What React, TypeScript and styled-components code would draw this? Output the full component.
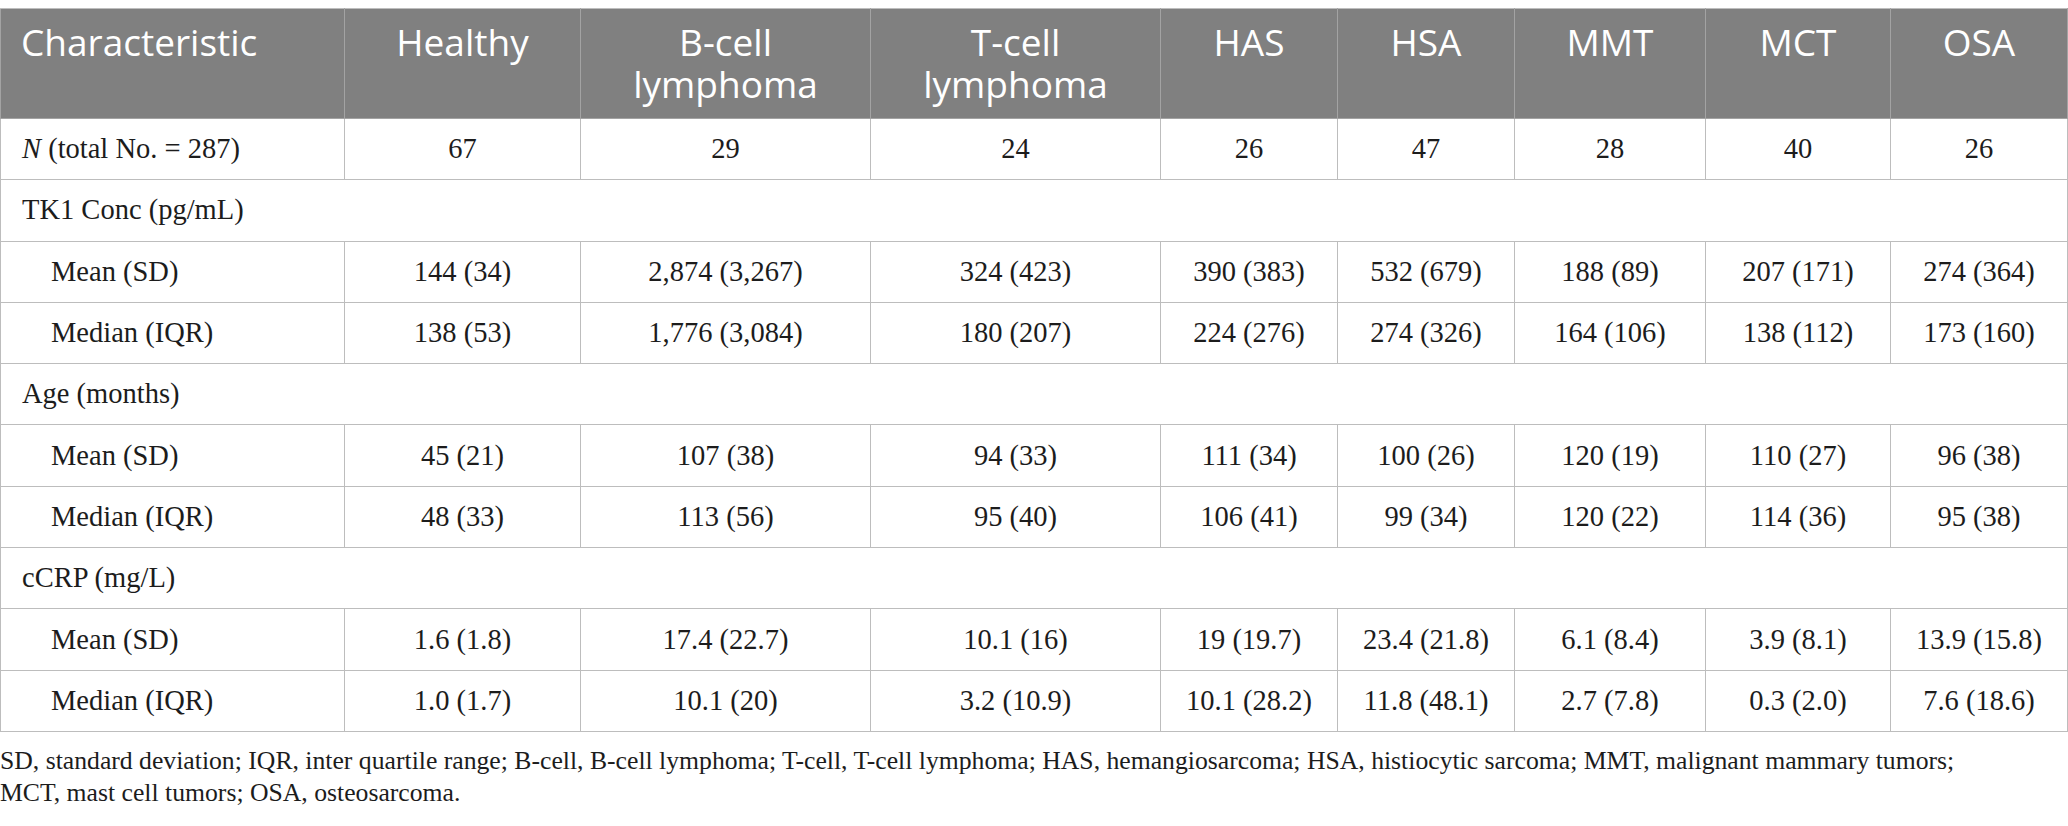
import { Fragment } from "react";
import styled, { createGlobalStyle } from "styled-components";

const GlobalStyle = createGlobalStyle`
  body {
    margin: 0;
    background: #ffffff;
  }
`;

const Page = styled.div`
  width: 2068px;
  padding-top: 8px;
`;

const Table = styled.table`
  border-collapse: collapse;
  table-layout: fixed;
  width: 2067px;
  font-family: "Liberation Serif", "Times New Roman", serif;
  font-size: 28.5px;
  color: #1c1c1c;
`;

const HeadCell = styled.th<{ $left?: boolean }>`
  height: 110px;
  box-sizing: border-box;
  padding: 12px 6px 0 ${(p) => (p.$left ? "20px" : "6px")};
  vertical-align: top;
  text-align: ${(p) => (p.$left ? "left" : "center")};
  background: #808080;
  border: 1px solid #a3a3a3;
  border-top-color: #bdbdbd;
  color: #ffffff;
  font-family: "Open Sans", "Noto Sans", sans-serif;
  font-weight: 400;
  font-size: 37px;
  line-height: 42px;
`;

const HeadLine = styled.div`
  white-space: nowrap;
`;

const Row = styled.tr`
  height: 61.3px;
`;

const Cell = styled.td<{ $indent?: boolean; $label?: boolean }>`
  padding: 0 0 0 ${(p) => (p.$indent ? "50px" : p.$label ? "21px" : "0")};
  text-align: ${(p) => (p.$label || p.$indent ? "left" : "center")};
  vertical-align: middle;
  border: 1px solid #bdbdbd;
  white-space: nowrap;
`;

const Italic = styled.i`
  font-style: italic;
`;

const Footnote = styled.p`
  margin: 13px 0 0;
  font-family: "Liberation Serif", "Times New Roman", serif;
  font-size: 25.7px;
  line-height: 32px;
  color: #1c1c1c;
  white-space: nowrap;
`;

const widths = [344, 236, 290, 290, 177, 177, 191, 185, 177];
const heads = [
  "Characteristic",
  "Healthy",
  "B-cell\nlymphoma",
  "T-cell\nlymphoma",
  "HAS",
  "HSA",
  "MMT",
  "MCT",
  "OSA",
];

type DataRow = { label: string; values: string[] };
type Section = { title: string; rows: DataRow[] };

const sections: Section[] = [
  {
    title: "TK1 Conc (pg/mL)",
    rows: [
      {
        label: "Mean (SD)",
        values: ["144 (34)", "2,874 (3,267)", "324 (423)", "390 (383)", "532 (679)", "188 (89)", "207 (171)", "274 (364)"],
      },
      {
        label: "Median (IQR)",
        values: ["138 (53)", "1,776 (3,084)", "180 (207)", "224 (276)", "274 (326)", "164 (106)", "138 (112)", "173 (160)"],
      },
    ],
  },
  {
    title: "Age (months)",
    rows: [
      {
        label: "Mean (SD)",
        values: ["45 (21)", "107 (38)", "94 (33)", "111 (34)", "100 (26)", "120 (19)", "110 (27)", "96 (38)"],
      },
      {
        label: "Median (IQR)",
        values: ["48 (33)", "113 (56)", "95 (40)", "106 (41)", "99 (34)", "120 (22)", "114 (36)", "95 (38)"],
      },
    ],
  },
  {
    title: "cCRP (mg/L)",
    rows: [
      {
        label: "Mean (SD)",
        values: ["1.6 (1.8)", "17.4 (22.7)", "10.1 (16)", "19 (19.7)", "23.4 (21.8)", "6.1 (8.4)", "3.9 (8.1)", "13.9 (15.8)"],
      },
      {
        label: "Median (IQR)",
        values: ["1.0 (1.7)", "10.1 (20)", "3.2 (10.9)", "10.1 (28.2)", "11.8 (48.1)", "2.7 (7.8)", "0.3 (2.0)", "7.6 (18.6)"],
      },
    ],
  },
];

const counts = ["67", "29", "24", "26", "47", "28", "40", "26"];

export default function App() {
  return (
    <Page>
      <GlobalStyle />
      <Table>
        <colgroup>
          {widths.map((w, i) => (
            <col key={i} style={{ width: w }} />
          ))}
        </colgroup>
        <thead>
          <tr>
            {heads.map((h, i) => (
              <HeadCell key={h} $left={i === 0}>
                {h.split("\n").map((line, j) => (
                  <HeadLine key={j}>{line}</HeadLine>
                ))}
              </HeadCell>
            ))}
          </tr>
        </thead>
        <tbody>
          <Row>
            <Cell $label>
              <Italic>N</Italic> (total No. = 287)
            </Cell>
            {counts.map((c, i) => (
              <Cell key={i}>{c}</Cell>
            ))}
          </Row>
          {sections.map((s) => (
            <Fragment key={s.title}>
              <Row>
                <Cell $label colSpan={9}>
                  {s.title}
                </Cell>
              </Row>
              {s.rows.map((r) => (
                <Row key={r.label}>
                  <Cell $indent>{r.label}</Cell>
                  {r.values.map((v, i) => (
                    <Cell key={i}>{v}</Cell>
                  ))}
                </Row>
              ))}
            </Fragment>
          ))}
        </tbody>
      </Table>
      <Footnote>
        SD, standard deviation; IQR, inter quartile range; B-cell, B-cell lymphoma; T-cell, T-cell lymphoma; HAS,
        hemangiosarcoma; HSA, histiocytic sarcoma; MMT, malignant mammary tumors;
        <br />
        MCT, mast cell tumors; OSA, osteosarcoma.
      </Footnote>
    </Page>
  );
}
